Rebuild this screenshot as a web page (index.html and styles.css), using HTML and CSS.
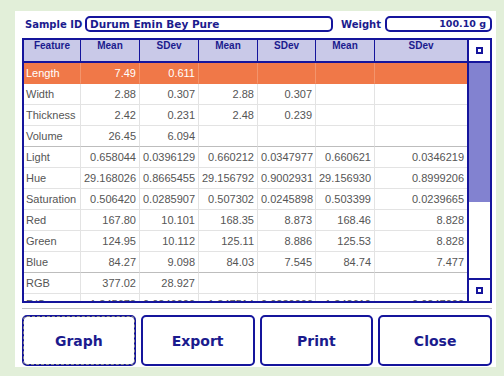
FILE: index.html
```html
<!DOCTYPE html>
<html lang="en">
<head>
<meta charset="utf-8" />
<meta name="viewport" content="width=device-width, initial-scale=1" />
<title>Sample Results</title>
<link rel="stylesheet" href="styles.css">
</head>
<body>

<div class="panel">
  <div class="top-row">
    <span class="field-label id-label">Sample ID</span>
    <div class="field field-id">Durum Emin Bey Pure</div>
    <span class="field-label weight-label">Weight</span>
    <div class="field field-weight">100.10 g</div>
  </div>

  <div class="grid-area">
    <div class="table-wrap">
      <table class="results">
        <colgroup>
          <col class="c-feat"><col class="c-num"><col class="c-num"><col class="c-num"><col class="c-num2"><col class="c-num"><col class="c-last">
        </colgroup>
        <thead>
          <tr><th>Feature</th><th>Mean</th><th>SDev</th><th>Mean</th><th>SDev</th><th>Mean</th><th>SDev</th></tr>
        </thead>
        <tbody>
          <tr class="selected"><td>Length</td><td>7.49</td><td>0.611</td><td></td><td></td><td></td><td></td></tr>
          <tr><td>Width</td><td>2.88</td><td>0.307</td><td>2.88</td><td>0.307</td><td></td><td></td></tr>
          <tr><td>Thickness</td><td>2.42</td><td>0.231</td><td>2.48</td><td>0.239</td><td></td><td></td></tr>
          <tr class="group-end"><td>Volume</td><td>26.45</td><td>6.094</td><td></td><td></td><td></td><td></td></tr>
          <tr><td>Light</td><td>0.658044</td><td>0.0396129</td><td>0.660212</td><td>0.0347977</td><td>0.660621</td><td>0.0346219</td></tr>
          <tr><td>Hue</td><td>29.168026</td><td>0.8665455</td><td>29.156792</td><td>0.9002931</td><td>29.156930</td><td>0.8999206</td></tr>
          <tr><td>Saturation</td><td>0.506420</td><td>0.0285907</td><td>0.507302</td><td>0.0245898</td><td>0.503399</td><td>0.0239665</td></tr>
          <tr><td>Red</td><td>167.80</td><td>10.101</td><td>168.35</td><td>8.873</td><td>168.46</td><td>8.828</td></tr>
          <tr><td>Green</td><td>124.95</td><td>10.112</td><td>125.11</td><td>8.886</td><td>125.53</td><td>8.828</td></tr>
          <tr class="group-end"><td>Blue</td><td>84.27</td><td>9.098</td><td>84.03</td><td>7.545</td><td>84.74</td><td>7.477</td></tr>
          <tr><td>RGB</td><td>377.02</td><td>28.927</td><td></td><td></td><td></td><td></td></tr>
          <tr><td>R/G</td><td>1.345678</td><td>0.0246000</td><td>1.347514</td><td>0.0230000</td><td>1.342610</td><td>0.0247000</td></tr>
        </tbody>
      </table>
    </div>
    <div class="scroller">
      <div class="scroll-btn"><span class="sq"></span></div>
      <div class="track"><div class="thumb"></div></div>
      <div class="scroll-btn"><span class="sq"></span></div>
    </div>
  </div>

  <div class="sep"></div>

  <div class="actions">
    <button class="btn focused">Graph</button>
    <button class="btn">Export</button>
    <button class="btn">Print</button>
    <button class="btn">Close</button>
  </div>
</div>

</body>
</html>
```

FILE: styles.css
```css
:root {
  --bg: #e2efd9;
  --navy: #15159c;
  --ink: #1b1b8e;
  --head: #c9c9e8;
  --sel: #f07848;
  --thumb: #8282d0;
  --cell: #555555;
  --grid: #e3e3e3;
}
*{box-sizing:border-box;}
body{
  margin:0;
  background:var(--bg);
  font-family:"DejaVu Sans",sans-serif;
}
.panel{
  margin:11px 0 0 15px;
  width:481px;
  height:356px;
  background:#fff;
  padding:5px 4px 1px 7px;
  display:flex;
  flex-direction:column;
}
.top-row{
  display:flex;
  align-items:center;
  height:16px;
  padding-left:3px;
}
.field-label{
  font-weight:bold;
  font-size:10px;
  color:var(--ink);
  white-space:nowrap;
}
.id-label{width:60px;}
.weight-label{width:44px;margin-left:8px;}
.field{
  height:16px;
  border:2px solid var(--navy);
  border-radius:5px;
  font-weight:bold;
  font-size:9px;
  line-height:12px;
  color:var(--ink);
  padding:0 4px;
  white-space:nowrap;
}
.field-id{width:248px;font-size:10.5px;padding-left:3px;}
.field-weight{width:107px;text-align:right;font-size:9.5px;}

.grid-area{
  display:flex;
  margin-top:6px;
  height:265px;
}
.table-wrap{
  width:445px;
  height:265px;
  border:2px solid var(--navy);
  border-right:none;
  overflow:hidden;
}
.results{
  width:443px;
  table-layout:fixed;
  border-collapse:separate;
  border-spacing:0;
  font-family:"Liberation Sans",Arial,sans-serif;
}
.c-feat{width:57px;}
.c-num{width:59px;}
.c-num2{width:58px;}
.c-last{width:92px;}
.results th{
  height:23px;
  background:var(--head);
  color:var(--ink);
  font-size:10px;
  line-height:10px;
  font-weight:bold;
  vertical-align:top;
  text-align:center;
  padding:1px 0 0;
  border-right:1px solid var(--navy);
  border-bottom:2px solid var(--navy);
}
.results th:last-child{border-right:none;}
.results td{
  height:21px;
  padding:0 3px;
  font-size:11px;
  color:var(--cell);
  text-align:right;
  white-space:nowrap;
  overflow:hidden;
  border-right:1px solid var(--grid);
  border-bottom:1px solid var(--grid);
}
.results td:first-child{text-align:left;padding-left:2px;}
.results td:last-child{border-right:none;}
.results tr.selected td{
  background:var(--sel);
  color:#fff;
  border-right-color:#f3946c;
  border-bottom-color:var(--sel);
}
.results tr.group-end td{border-bottom-color:#bdbdbd;}

.scroller{
  width:25px;
  height:265px;
  display:flex;
  flex-direction:column;
}
.scroll-btn{
  height:25px;
  border:2px solid var(--navy);
  background:#fff;
  display:flex;
  align-items:center;
  justify-content:center;
}
.sq{
  width:7px;
  height:7px;
  border:2px solid var(--navy);
}
.track{
  flex:1;
  border-left:2px solid var(--navy);
  border-right:2px solid var(--navy);
  background:#fff;
}
.thumb{
  height:139px;
  background:var(--thumb);
}

.sep{
  margin-top:5px;
  height:1px;
  background:#c4c4c4;
}
.actions{
  display:flex;
  gap:5px;
  margin-top:6px;
  height:51px;
}
.btn{
  flex:1;
  border:2px solid var(--navy);
  border-radius:5px;
  background:#fff;
  font-family:"DejaVu Sans",sans-serif;
  font-weight:bold;
  font-size:14px;
  color:var(--ink);
  cursor:pointer;
}
.btn.focused{
  outline:1px dashed #8a8a8a;
  outline-offset:-2px;
}
```
